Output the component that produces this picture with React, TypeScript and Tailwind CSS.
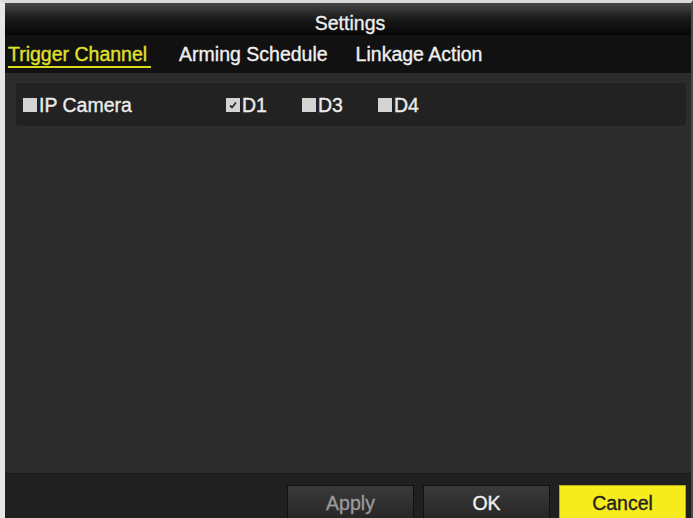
import React from "react";

const font = { fontFamily: '"Liberation Sans", Arial, sans-serif' };

// slightly heavier than regular, lighter than bold (DVR menu look)
const txt = "text-[19.5px] leading-[22px] [-webkit-text-stroke:0.35px_currentColor]";

function Box({ checked }: { checked?: boolean }) {
  return (
    <span className="w-[14px] h-[14px] bg-[#d4d4d4] flex items-center justify-center shrink-0">
      {checked && (
        <svg width="10" height="10" viewBox="0 0 10 10">
          <path d="M2 5.5 L4 7.5 L8 2.5" fill="none" stroke="#2a2a2a" strokeWidth="1.8" />
        </svg>
      )}
    </span>
  );
}

function Check({ label, checked, className = "" }: { label: string; checked?: boolean; className?: string }) {
  return (
    <div className={`flex items-center gap-[2px] ${className}`}>
      <Box checked={checked} />
      <span className={`${txt} text-[#ececec]`}>{label}</span>
    </div>
  );
}

export default function App() {
  const tabs = ["Trigger Channel", "Arming Schedule", "Linkage Action"];

  return (
    <div
      style={font}
      className="w-[693px] h-[518px] flex flex-col bg-[#2c2c2c] border-l-[5px] border-l-[#e6e6e6] border-t-[3px] border-t-[#d9d9d9] border-r-[2px] border-r-[#4a4a4a] overflow-hidden"
    >
      <div className="h-[32px] shrink-0 flex items-end justify-center bg-gradient-to-b from-[#474747] via-[#1a1a1a] to-[#070707]">
        <span className={`${txt} text-[#ececec] pb-[1px] ml-[4px]`}>Settings</span>
      </div>

      <div className="h-[38px] shrink-0 flex items-center bg-[#111111] pl-[3px] gap-[28px]">
        {tabs.map((t, i) =>
          i === 0 ? (
            <span
              key={t}
              className={`${txt} text-[#e0e22a] border-b-2 border-[#d9dc1e] pb-[1px] pr-[4px] mt-[3px]`}
            >
              {t}
            </span>
          ) : (
            <span key={t} className={`${txt} text-[#f0f0f0]`}>
              {t}
            </span>
          )
        )}
      </div>

      <div className="flex-1 pl-[10px] pr-[4px] pt-[9px] bg-[#2c2c2c]">
        <div className="h-[45px] flex items-center pl-[7px] bg-[#222222] border border-[#2f2f2f] rounded-[3px]">
          <Check label="IP Camera" className="w-[203px]" />
          <div className="flex items-center gap-[35px]">
            <Check label="D1" checked />
            <Check label="D3" />
            <Check label="D4" />
          </div>
        </div>
      </div>

      <div className="h-[45px] shrink-0 bg-[#202020] border-t border-[#1a1a1a] flex justify-end items-start pt-[11px] pr-[5px] gap-[9px]">
        <button className={`w-[127px] h-[36px] shrink-0 bg-gradient-to-b from-[#3a3a3a] to-[#262626] border border-[#111111] ${txt} text-[#9b9b9b]`}>
          Apply
        </button>
        <button className={`w-[127px] h-[36px] shrink-0 bg-gradient-to-b from-[#3a3a3a] to-[#262626] border border-[#111111] ${txt} text-[#f0f0f0]`}>
          OK
        </button>
        <button className={`w-[127px] h-[36px] shrink-0 bg-[#f6ec1c] border border-[#b8ad10] ${txt} text-[#222222]`}>
          Cancel
        </button>
      </div>
    </div>
  );
}
